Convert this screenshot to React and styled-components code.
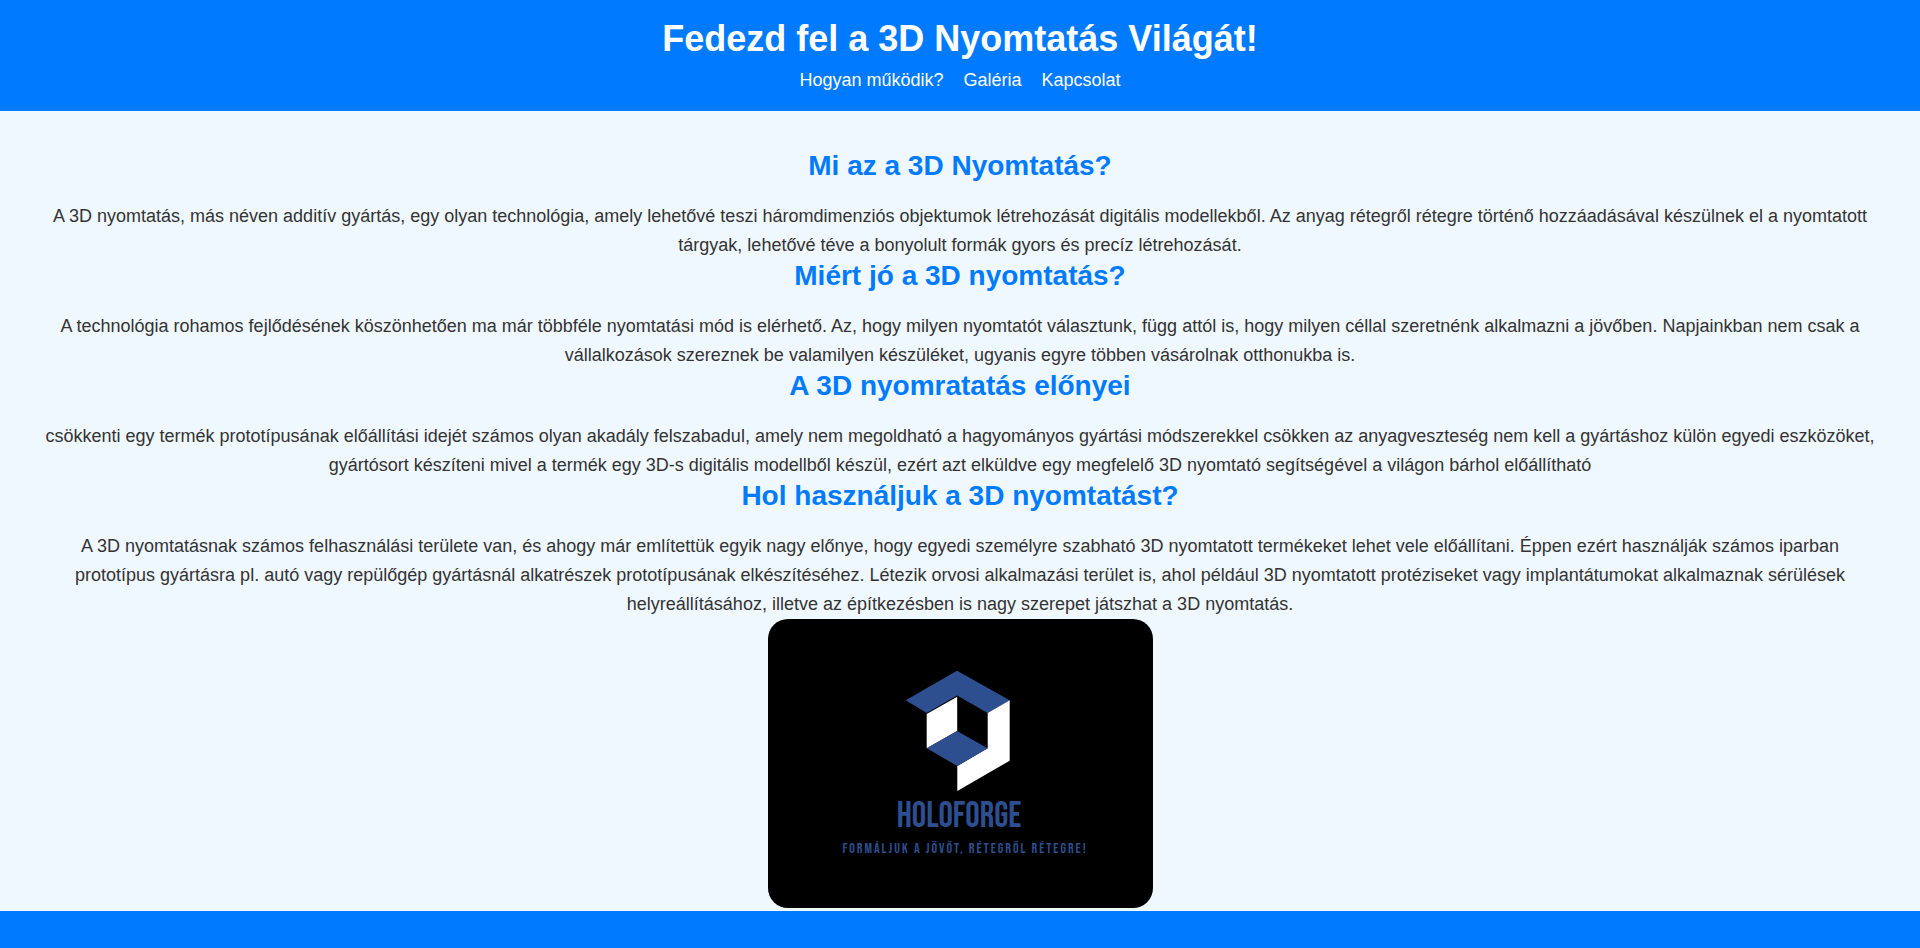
import React from 'react';
import styled, { createGlobalStyle } from 'styled-components';

const GlobalStyle = createGlobalStyle`
  * {
    box-sizing: border-box;
    margin: 0;
    padding: 0;
  }

  body {
    background: #f0f8ff;
    color: #333;
    font-family: Arial, "Liberation Sans", sans-serif;
    font-size: 18px;
    line-height: 29px;
  }
`;

const Page = styled.div`
  display: flex;
  flex-direction: column;
  min-height: 100vh;
  text-align: center;
`;

const Header = styled.header`
  display: flex;
  flex-direction: column;
  gap: 5px;
  padding: 16px;
  background: #007bff;
  color: #fff;
`;

const Title = styled.h1`
  font-size: 36px;
  line-height: 45px;
`;

const Nav = styled.nav`
  display: flex;
  flex-wrap: wrap;
  justify-content: center;
  gap: 0 20px;
`;

const NavLink = styled.a`
  color: #fff;
  text-decoration: none;

  &:hover {
    text-decoration: underline;
  }
`;

const Main = styled.main`
  display: flex;
  flex-direction: column;
  padding: 39px 40px 3px;
`;

const Heading = styled.h2`
  margin-bottom: 20px;
  color: #007bff;
  font-size: 28px;
  line-height: 32px;
`;

const LogoCard = styled.figure`
  align-self: center;
  width: 385px;
  max-width: 100%;
  overflow: hidden;
  border-radius: 20px;
  background: #000;
`;

const LogoDrawing = styled.svg`
  display: block;
  width: 100%;
  height: auto;
  fill: #2d4f8f;
  font-family: "Bebas Neue", "Roboto Condensed", Roboto, sans-serif;
  text-anchor: middle;
`;

const BrandName = styled.text`
  font-size: 36px;
`;

const Tagline = styled.text`
  font-size: 14px;
  letter-spacing: 2px;
`;

const Footer = styled.footer`
  flex: 1 0 auto;
  min-height: 36px;
  background: #007bff;
`;

const links = [
  { label: 'Hogyan működik?', href: '#hogyan' },
  { label: 'Galéria', href: '#galeria' },
  { label: 'Kapcsolat', href: '#kapcsolat' },
];

const sections = [
  {
    title: 'Mi az a 3D Nyomtatás?',
    text: 'A 3D nyomtatás, más néven additív gyártás, egy olyan technológia, amely lehetővé teszi háromdimenziós objektumok létrehozását digitális modellekből. Az anyag rétegről rétegre történő hozzáadásával készülnek el a nyomtatott tárgyak, lehetővé téve a bonyolult formák gyors és precíz létrehozását.',
  },
  {
    title: 'Miért jó a 3D nyomtatás?',
    text: 'A technológia rohamos fejlődésének köszönhetően ma már többféle nyomtatási mód is elérhető. Az, hogy milyen nyomtatót választunk, függ attól is, hogy milyen céllal szeretnénk alkalmazni a jövőben. Napjainkban nem csak a vállalkozások szereznek be valamilyen készüléket, ugyanis egyre többen vásárolnak otthonukba is.',
  },
  {
    title: 'A 3D nyomratatás előnyei',
    text: 'csökkenti egy termék prototípusának előállítási idejét számos olyan akadály felszabadul, amely nem megoldható a hagyományos gyártási módszerekkel csökken az anyagveszteség nem kell a gyártáshoz külön egyedi eszközöket, gyártósort készíteni mivel a termék egy 3D-s digitális modellből készül, ezért azt elküldve egy megfelelő 3D nyomtató segítségével a világon bárhol előállítható',
  },
  {
    title: 'Hol használjuk a 3D nyomtatást?',
    text: 'A 3D nyomtatásnak számos felhasználási területe van, és ahogy már említettük egyik nagy előnye, hogy egyedi személyre szabható 3D nyomtatott termékeket lehet vele előállítani. Éppen ezért használják számos iparban prototípus gyártásra pl. autó vagy repülőgép gyártásnál alkatrészek prototípusának elkészítéséhez. Létezik orvosi alkalmazási terület is, ahol például 3D nyomtatott protéziseket vagy implantátumokat alkalmaznak sérülések helyreállításához, illetve az építkezésben is nagy szerepet játszhat a 3D nyomtatás.',
  },
];

function Logo() {
  return (
    <LogoCard>
      <LogoDrawing viewBox="0 0 385 289">
        <path d="M189 51.7 L241.7 81.3 L219.7 94 L189 76.5 L158.7 94 L137.7 81.3 Z" />
        <path fill="#fff" d="M158.7 95 L189.2 77.7 V112 L158.7 129.3 Z" />
        <path fill="#fff" d="M241.7 81.3 V141.7 L189.3 172 V147 L219.7 129.3 V94 Z" />
        <path d="M189 112 L219.7 129.3 L189.3 147 L158.7 129.3 Z" />
        <BrandName x="191" y="208">HOLOFORGE</BrandName>
        <Tagline x="197" y="234">FORMÁLJUK A JÖVŐT, RÉTEGRŐL RÉTEGRE!</Tagline>
      </LogoDrawing>
    </LogoCard>
  );
}

export default function App() {
  return (
    <Page>
      <GlobalStyle />
      <Header>
        <Title>Fedezd fel a 3D Nyomtatás Világát!</Title>
        <Nav>
          {links.map((link) => (
            <NavLink key={link.href} href={link.href}>
              {link.label}
            </NavLink>
          ))}
        </Nav>
      </Header>
      <Main>
        {sections.map((section) => (
          <section key={section.title}>
            <Heading>{section.title}</Heading>
            <p>{section.text}</p>
          </section>
        ))}
        <Logo />
      </Main>
      <Footer />
    </Page>
  );
}
